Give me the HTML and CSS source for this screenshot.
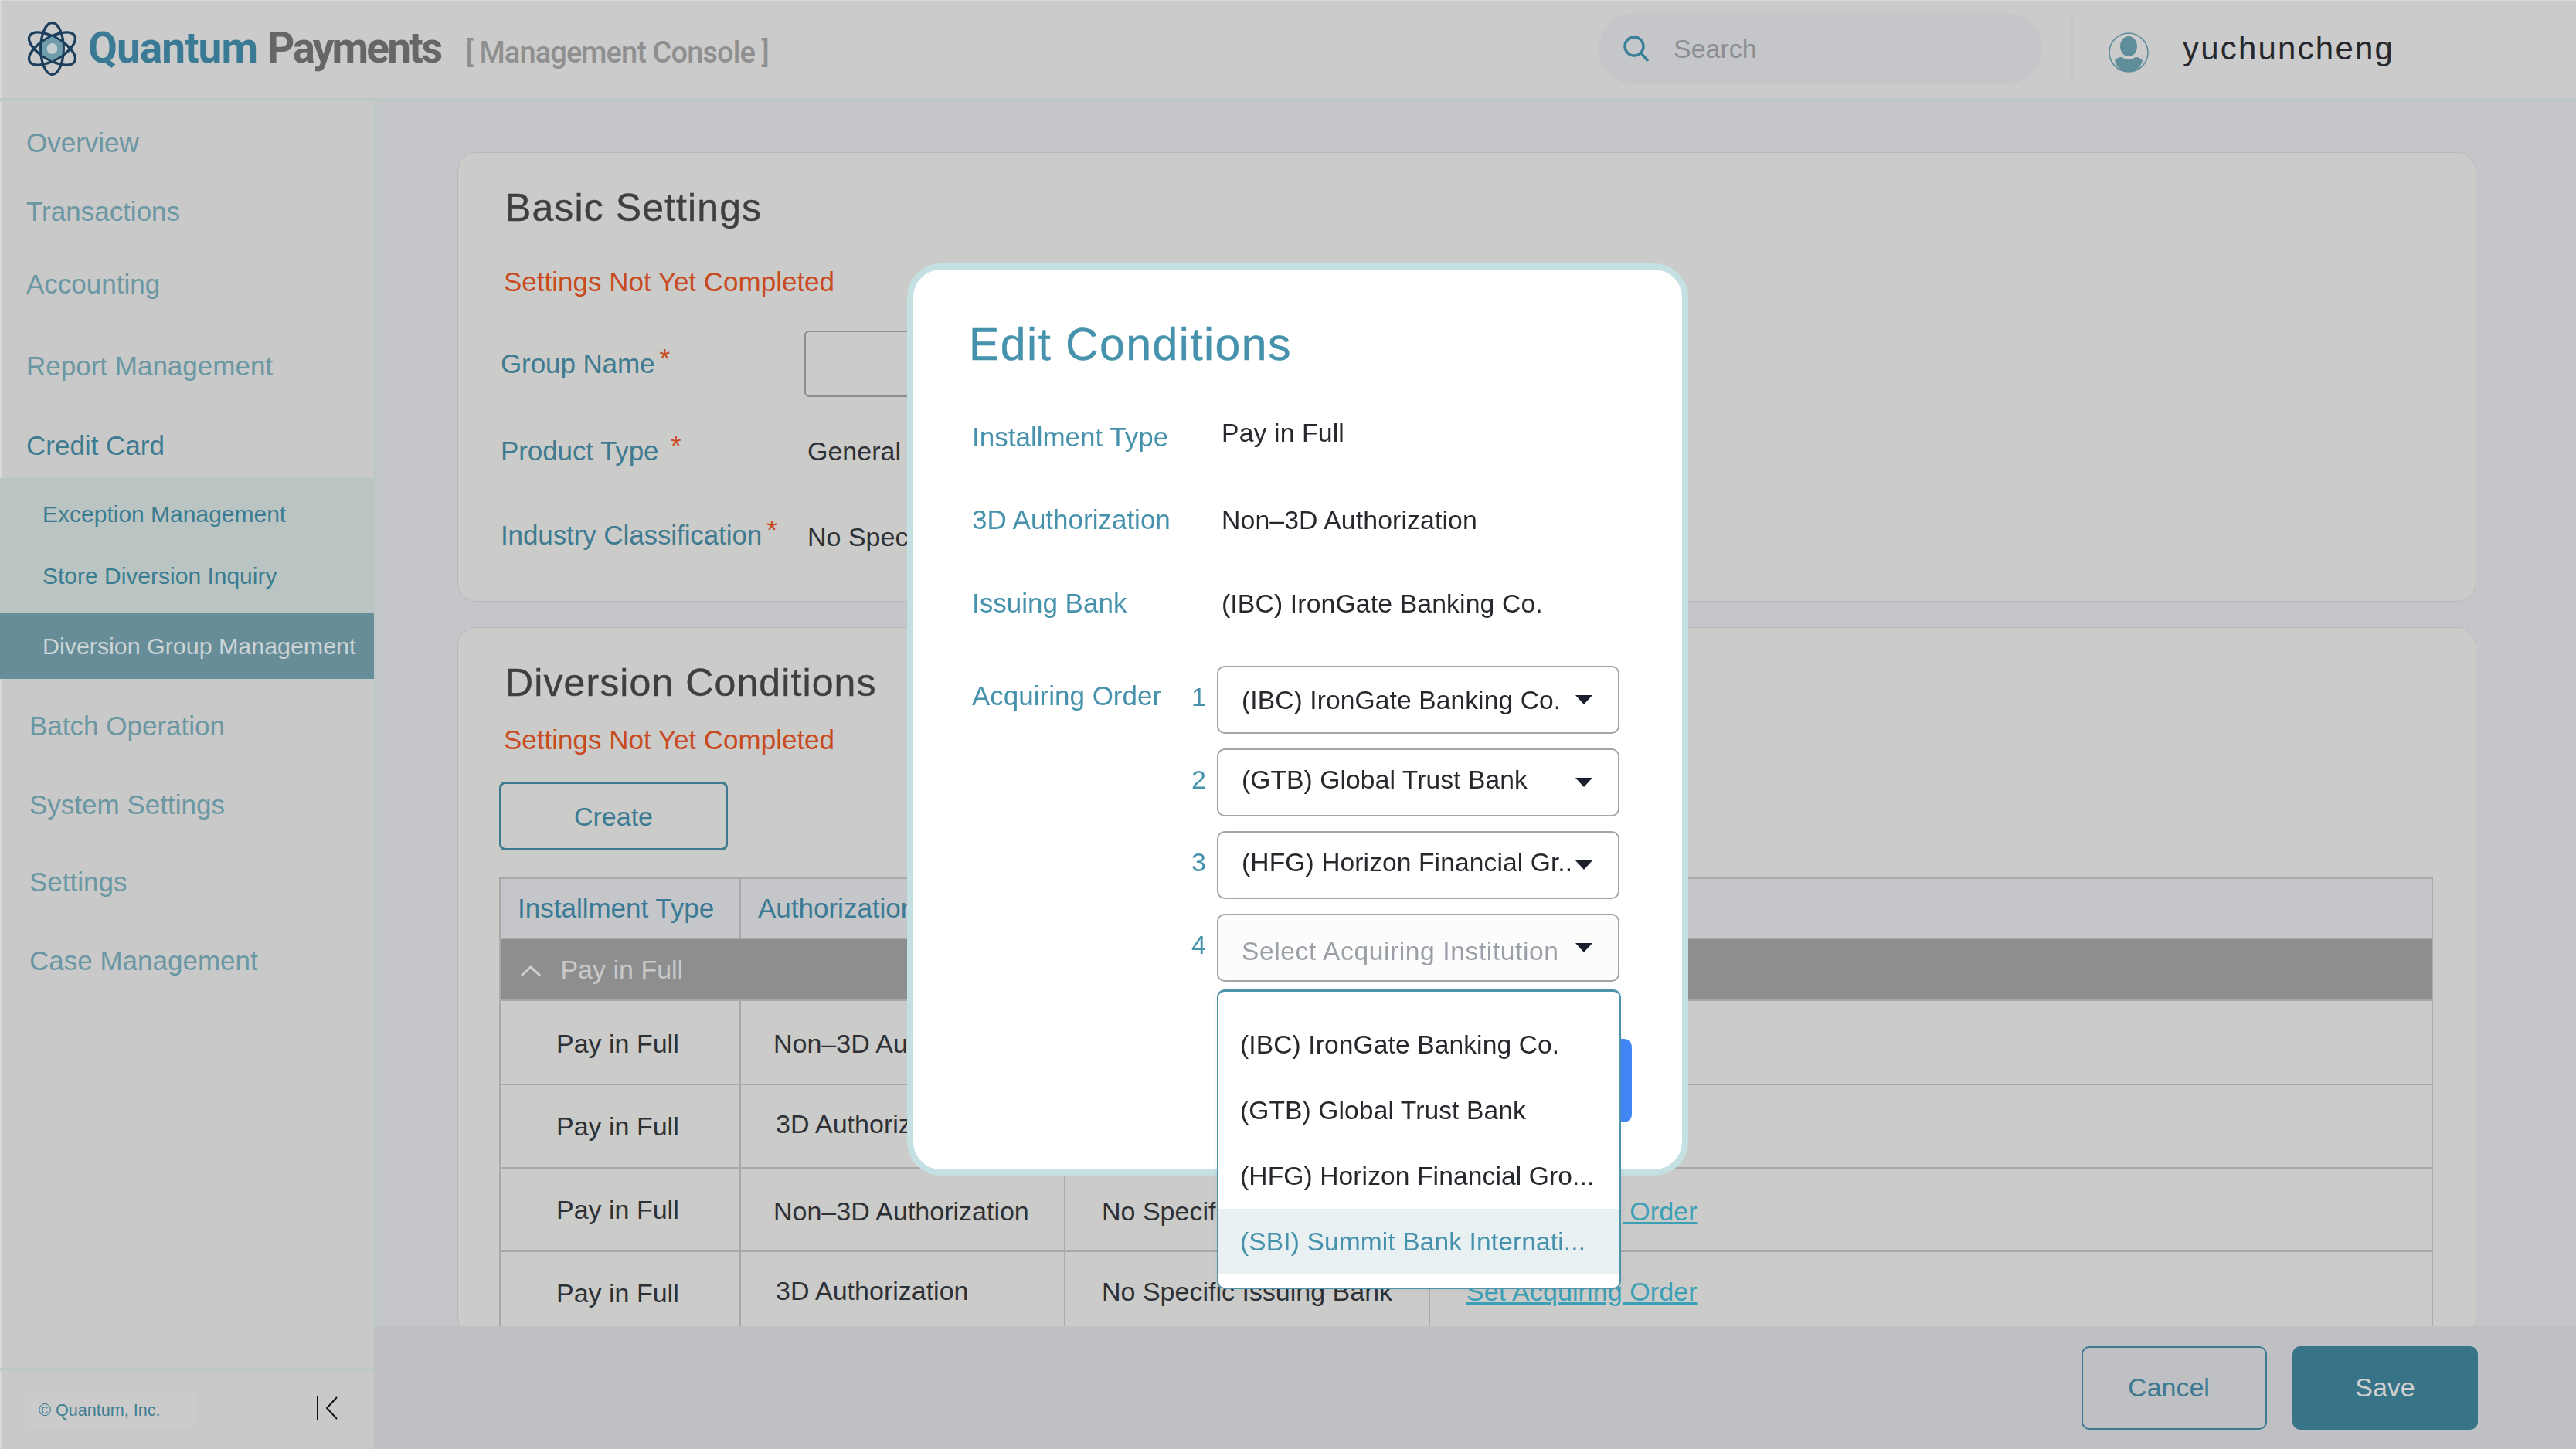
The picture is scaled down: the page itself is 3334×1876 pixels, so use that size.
FILE: index.html
```html
<!DOCTYPE html>
<html lang="en">
<head>
    <meta charset="UTF-8">
    <meta name="viewport" content="width=device-width, initial-scale=1.0">
    <title>Quantum Payments - Diversion Group Management</title>
    <link rel="stylesheet" href="styles.css">
</head>
<body>
    <header class="topbar">
        <div class="brand">
            <svg class="brand-logo" viewBox="0 0 68 72" fill="none" stroke="#1b3f5c" stroke-width="3.4">
                <ellipse cx="34" cy="36" rx="15" ry="34"/>
                <ellipse cx="34" cy="36" rx="15" ry="34" transform="rotate(60 34 36)"/>
                <ellipse cx="34" cy="36" rx="15" ry="34" transform="rotate(120 34 36)"/>
                <polygon points="34,20 47,28 47,44 34,52 21,44 21,28" fill="#6f9dab" stroke="none"/>
                <circle cx="34" cy="36" r="7" fill="#c4cdd0" stroke="none"/>
            </svg>
            <span class="brand-name">Quantum</span>
            <span class="brand-sub">Payments</span>
            <span class="brand-console">[ Management Console ]</span>
        </div>
        <div class="search">
            <svg class="search-icon" viewBox="0 0 36 34" fill="none" stroke="#3a7f98" stroke-width="3.4">
                <circle cx="15" cy="14" r="12"/>
                <path d="M24 23 L33 33"/>
            </svg>
            <span class="search-text">Search</span>
        </div>
        <div class="user">
            <svg class="user-avatar" viewBox="0 0 52 52" fill="none">
                <circle cx="26" cy="26" r="25" stroke="#5f8d9a" stroke-width="1.6"/>
                <ellipse cx="26" cy="18" rx="11" ry="13" fill="#5f8d9a"/>
                <path d="M8 36 C12 32 17 31 19 33 C22 36 30 36 33 33 C35 31 40 32 44 36 C42 46 34 51 26 51 C18 51 10 46 8 36 Z" fill="#5f8d9a"/>
            </svg>
            <span class="user-name">yuchuncheng</span>
        </div>
    </header>

    <div class="layout">
        <aside class="sidebar">
            <nav class="nav">
                <a class="nav-item">Overview</a>
                <a class="nav-item">Transactions</a>
                <a class="nav-item">Accounting</a>
                <a class="nav-item">Report Management</a>
                <a class="nav-item nav-open">Credit Card</a>
                <div class="subnav">
                    <a class="subnav-item subnav-first">Exception Management</a>
                    <a class="subnav-item">Store Diversion Inquiry</a>
                </div>
                <a class="subnav-item subnav-active">Diversion Group Management</a>
                <a class="nav-item nav-lower">Batch Operation</a>
                <a class="nav-item nav-lower">System Settings</a>
                <a class="nav-item nav-lower">Settings</a>
                <a class="nav-item nav-lower">Case Management</a>
            </nav>
            <div class="sidebar-foot">
                <span class="copyright">© Quantum, Inc.</span>
                <svg class="collapse-icon" viewBox="0 0 27 32" fill="none" stroke="#111" stroke-width="2">
                    <path d="M1 0 V32"/>
                    <path d="M26 2 L13 16 L26 30"/>
                </svg>
            </div>
        </aside>

        <main class="main">
            <div class="content">
                <section class="card card-basic">
                    <h2 class="card-title">Basic Settings</h2>
                    <p class="warning">Settings Not Yet Completed</p>
                    <div class="form">
                        <div class="form-row">
                            <label class="form-label">Group Name<span class="star">*</span></label>
                            <div class="text-input"></div>
                        </div>
                        <div class="form-row">
                            <label class="form-label label-low">Product Type <span class="star">*</span></label>
                            <span class="form-value">General</span>
                        </div>
                        <div class="form-row">
                            <label class="form-label">Industry Classification<span class="star">*</span></label>
                            <span class="form-value">No Specific</span>
                        </div>
                    </div>
                </section>

                <section class="card card-conditions">
                    <h2 class="card-title">Diversion Conditions</h2>
                    <p class="warning">Settings Not Yet Completed</p>
                    <button class="btn-create">Create</button>
                    <table class="conditions">
                        <colgroup>
                            <col class="col-type">
                            <col class="col-auth">
                            <col class="col-bank">
                            <col>
                        </colgroup>
                        <thead>
                            <tr>
                                <th>Installment Type</th>
                                <th>Authorization</th>
                                <th></th>
                                <th></th>
                            </tr>
                        </thead>
                        <tbody>
                            <tr class="group-row">
                                <td colspan="4">
                                    <svg class="group-chevron" viewBox="0 0 26 14" fill="none" stroke="#cfcfcf" stroke-width="3">
                                        <path d="M1 13 L13 2 L25 13"/>
                                    </svg>
                                    Pay in Full
                                </td>
                            </tr>
                            <tr class="row-a">
                                <td class="cell-down">Pay in Full</td>
                                <td class="cell-down">Non–3D Authorization</td>
                                <td></td>
                                <td></td>
                            </tr>
                            <tr class="row-b">
                                <td>Pay in Full</td>
                                <td class="cell-shift">3D Authorization</td>
                                <td></td>
                                <td></td>
                            </tr>
                            <tr class="row-b">
                                <td>Pay in Full</td>
                                <td class="cell-down">Non–3D Authorization</td>
                                <td class="cell-down">No Specific Issuing Bank</td>
                                <td class="cell-down"><a class="order-link">Set Acquiring Order</a></td>
                            </tr>
                            <tr class="row-a">
                                <td>Pay in Full</td>
                                <td class="cell-shift">3D Authorization</td>
                                <td class="cell-up">No Specific Issuing Bank</td>
                                <td class="cell-up"><a class="order-link">Set Acquiring Order</a></td>
                            </tr>
                        </tbody>
                    </table>
                </section>
            </div>
            <footer class="actions">
                <button class="btn-cancel">Cancel</button>
                <button class="btn-save">Save</button>
            </footer>
        </main>
    </div>

    <div class="modal">
        <h2 class="modal-title">Edit Conditions</h2>
        <div class="details">
            <div class="detail-row">
                <span class="detail-label">Installment Type</span>
                <span class="detail-value detail-raised">Pay in Full</span>
            </div>
            <div class="detail-row">
                <span class="detail-label">3D Authorization</span>
                <span class="detail-value">Non–3D Authorization</span>
            </div>
            <div class="detail-row">
                <span class="detail-label">Issuing Bank</span>
                <span class="detail-value">(IBC) IronGate Banking Co.</span>
            </div>
        </div>
        <div class="order">
            <span class="detail-label order-label">Acquiring Order</span>
            <span class="order-num">1</span>
            <div class="select"><span class="select-text">(IBC) IronGate Banking Co.</span><i class="arrow"></i></div>
            <span></span>
            <span class="order-num">2</span>
            <div class="select"><span class="select-text text-up">(GTB) Global Trust Bank</span><i class="arrow"></i></div>
            <span></span>
            <span class="order-num">3</span>
            <div class="select"><span class="select-text text-up">(HFG) Horizon Financial Gr..</span><i class="arrow"></i></div>
            <span></span>
            <span class="order-num">4</span>
            <div class="select select-empty"><span class="select-text text-down">Select Acquiring Institution</span><i class="arrow"></i></div>
        </div>
        <div class="modal-actions">
            <button class="btn-confirm"></button>
        </div>
        <ul class="dropdown">
            <li>(IBC) IronGate Banking Co.</li>
            <li>(GTB) Global Trust Bank</li>
            <li>(HFG) Horizon Financial Gro...</li>
            <li class="is-hover">(SBI) Summit Bank Internati...</li>
        </ul>
    </div>
</body>
</html>
```

FILE: styles.css
```css
* {
    box-sizing: border-box;
}
html, body {
    margin: 0;
    height: 100%;
}
body {
    display: flex;
    flex-direction: column;
    height: 1876px;
    overflow: hidden;
    font-family: "Liberation Sans", Arial, sans-serif;
    font-size: 34px;
    color: #2d3034;
    background-color: #c4c6c9;
}
h2, p, ul {
    margin: 0;
    padding: 0;
}

/* top bar */
.topbar {
    display: flex;
    align-items: center;
    flex: none;
    height: 131px;
    padding: 0 0 2px 34px;
    background-color: #cbcbcb;
    border-bottom: 4px solid #bcc8c6;
    box-shadow: inset 3px 1px 0 #d8d8d8;
}
.brand {
    display: flex;
    align-items: center;
    width: 2035px;
}
.brand-logo {
    width: 67px;
    height: 72px;
    margin-right: 13px;
}
.brand-name {
    margin-right: 13px;
    margin-bottom: 2px;
    font-family: Roboto, sans-serif;
    font-size: 55px;
    font-weight: 700;
    letter-spacing: -1px;
    color: #3a7a94;
}
.brand-sub {
    margin-right: 32px;
    margin-bottom: 2px;
    font-family: Roboto, sans-serif;
    font-size: 55px;
    font-weight: 700;
    letter-spacing: -2.8px;
    color: #666;
}
.brand-console {
    margin-top: 10px;
    font-family: Roboto, sans-serif;
    font-size: 38px;
    font-weight: 500;
    letter-spacing: -0.9px;
    color: #8f8f8f;
}
.search {
    display: flex;
    align-items: center;
    width: 574px;
    height: 92px;
    padding-left: 31px;
    border-radius: 46px;
    background-color: #c4c6c9;
}
.search-icon {
    width: 36px;
    height: 34px;
    margin-right: 30px;
}
.search-text {
    padding-top: 2px;
    color: #8c8e92;
}
.user {
    display: flex;
    align-items: center;
    height: 83px;
    margin-left: 38px;
    padding-left: 46px;
    border-left: 2px solid #bcc8c6;
}
.user-avatar {
    width: 52px;
    height: 52px;
    margin: 10px 44px 0 0;
}
.user-name {
    font-size: 42px;
    letter-spacing: 2.2px;
    color: #26282b;
}

/* sidebar */
.layout {
    display: flex;
    flex: 1;
    min-height: 0;
}
.sidebar {
    display: flex;
    flex-direction: column;
    flex: none;
    width: 484px;
    background-color: #c9c9c9;
    box-shadow: inset 3px 0 0 #d8d8d8;
}
.nav {
    display: grid;
    flex: 1;
    grid-template-rows: 90px 88px 100px 112px 89px 174px 86px 122px 82px 118px 86px;
    align-content: start;
    padding-top: 9px;
}
.nav-item {
    display: flex;
    align-items: center;
    padding-left: 34px;
    font-size: 35px;
    color: #6b97a3;
}
.nav-open {
    padding-top: 4px;
    color: #3e7b90;
}
.nav-lower {
    padding-left: 38px;
}
.subnav {
    display: flex;
    flex-direction: column;
    background-color: #b9c4c3;
}
.subnav-item {
    display: flex;
    align-items: center;
    padding-left: 55px;
    font-size: 30px;
    color: #3a7c90;
}
.subnav-first {
    height: 94px;
}
.subnav-item:not(.subnav-first):not(.subnav-active) {
    height: 66px;
}
.subnav-active {
    font-size: 30.4px;
    color: #ccd4d6;
    background-color: #678d98;
}
.sidebar-foot {
    display: flex;
    flex: none;
    align-items: center;
    justify-content: space-between;
    height: 105px;
    padding: 0 47px 0 34px;
    border-top: 4px solid #bcc8c6;
}
.copyright {
    width: 218px;
    height: 43px;
    padding-left: 16px;
    font-size: 21.6px;
    line-height: 43px;
    color: #3f7d92;
    background-color: #cbcbcb;
}
.collapse-icon {
    width: 27px;
    height: 32px;
    margin-bottom: 6px;
}

/* main */
.main {
    display: flex;
    flex-direction: column;
    flex: 1;
    min-width: 0;
}
.content {
    flex: 1;
    min-height: 0;
    overflow: hidden;
    padding: 66px 129px 0 104px;
    border-left: 4px solid #bcc8c6;
}
.card {
    border: 1px solid #b9b9bb;
    border-radius: 24px;
    background-color: #cbcbca;
    padding: 39px 55px 0 53px;
}
.card-basic {
    height: 582px;
    margin-bottom: 33px;
}
.card-title {
    margin-top: 2px;
    margin-bottom: -2px;
    margin-left: 8px;
    font-size: 50px;
    font-weight: 400;
    line-height: 60px;
    letter-spacing: 1.1px;
    color: #3f3f3f;
    -webkit-text-stroke: 0.4px #3f3f3f;
}
.warning {
    margin: 46px 0 0 6px;
    font-size: 35px;
    line-height: 44px;
    color: #c84a1f;
}
.card-conditions .warning {
    margin-top: 24px;
}
.form {
    display: flex;
    flex-direction: column;
    gap: 25px;
    margin-top: 41px;
}
.form-row {
    display: flex;
    align-items: center;
    height: 86px;
    padding-left: 2px;
}
.form-label {
    width: 393px;
    flex: none;
    font-size: 35px;
    letter-spacing: -0.1px;
    color: #3e7b90;
}
.label-low {
    padding-top: 3px;
}
.star {
    position: relative;
    top: -7px;
    margin-left: 6px;
    color: #c84a1f;
}
.form-value {
    margin: 4px 0 0 4px;
}
.text-input {
    width: 600px;
    height: 86px;
    border: 2px solid #8e8e8e;
    border-radius: 6px;
}
.btn-create {
    display: block;
    width: 296px;
    height: 89px;
    margin: 32px 0 35px 0;
    padding-top: 3px;
    border: 3px solid #3b7a91;
    border-radius: 8px;
    font: inherit;
    color: #3b7a91;
    background: none;
}

/* table */
.conditions {
    width: 2503px;
    table-layout: fixed;
    border-collapse: collapse;
}
.col-type {
    width: 311px;
}
.col-auth {
    width: 420px;
}
.col-bank {
    width: 472px;
}
.conditions th, .conditions td {
    padding: 0 0 0 47px;
    border: 2px solid #a9a9a9;
    text-align: left;
    white-space: nowrap;
    overflow: hidden;
}
.conditions th {
    height: 78px;
    padding-left: 22px;
    font-weight: 400;
    font-size: 35px;
    color: #3a7a94;
    background-color: #c4c6c9;
}
.conditions td:first-child {
    padding-left: 72px;
}
.conditions td:nth-child(2) {
    padding-left: 42px;
}
.conditions td.cell-shift {
    padding-left: 45px;
    padding-bottom: 6px;
}
.conditions td.cell-down {
    padding-top: 4px;
}
.conditions td.cell-up {
    padding-bottom: 4px;
}
.row-a {
    height: 109px;
}
.row-b {
    height: 108px;
}
.conditions .group-row td {
    height: 80px;
    padding-left: 26px;
    color: #c9c9c9;
    background-color: #8e8e8e;
}
.group-chevron {
    width: 26px;
    height: 14px;
    margin: 0 16px 3px 0;
}
.order-link {
    letter-spacing: 0.1px;
    color: #3b9fb5;
    text-decoration: underline;
}

/* bottom actions */
.actions {
    display: flex;
    flex: none;
    align-items: center;
    justify-content: flex-end;
    gap: 33px;
    height: 159px;
    padding-right: 127px;
    background-color: #bfc0c4;
}
.btn-cancel, .btn-save {
    width: 240px;
    height: 108px;
    border-radius: 10px;
    font: inherit;
}
.btn-cancel {
    padding-right: 20px;
    border: 2px solid #3d7a90;
    color: #3d7a90;
    background: none;
}
.btn-save {
    border: none;
    color: #d0d0d0;
    background-color: #377488;
}

/* modal */
.modal {
    position: fixed;
    top: 341px;
    left: 1174px;
    width: 1011px;
    height: 1181px;
    padding: 62px 0 0 74px;
    border: 8px solid #c5e0e2;
    border-radius: 44px;
    background-color: #fff;
}
.modal-title {
    margin-left: -2px;
    font-size: 59px;
    font-weight: 400;
    line-height: 70px;
    letter-spacing: 1.4px;
    color: #4692ad;
    -webkit-text-stroke: 0.4px #4692ad;
}
.details {
    display: grid;
    grid-template-rows: 108px 106px 110px;
    margin: 31px 0 26px 2px;
}
.detail-row {
    display: flex;
    align-items: center;
}
.detail-label {
    width: 323px;
    flex: none;
    font-size: 35px;
    color: #4692ad;
}
.detail-value {
    font-size: 33.8px;
    letter-spacing: 0.1px;
    color: #25282c;
}
.detail-raised {
    margin-bottom: 12px;
}
.order {
    display: grid;
    grid-template-columns: 284px 33px 521px;
    grid-auto-rows: 88px;
    row-gap: 19px;
    align-items: center;
    margin-left: 2px;
}
.order-label {
    width: auto;
    margin-bottom: 10px;
}
.order-num {
    padding-right: 20px;
    margin-bottom: 8px;
    text-align: right;
    color: #4692ad;
}
.select {
    display: flex;
    align-items: center;
    justify-content: space-between;
    height: 88px;
    padding: 0 33px 0 30px;
    border: 2px solid #a3a5ad;
    border-radius: 10px;
    font-size: 33.6px;
    letter-spacing: 0.1px;
    white-space: nowrap;
    color: #25282c;
}
.select-text {
    padding-top: 2px;
}
.select-empty {
    letter-spacing: 0.6px;
    color: #9aa0a6;
    background-color: #fcfcfd;
}
.text-up {
    padding: 0 0 6px;
}
.text-down {
    padding-top: 9px;
}
.arrow {
    flex: none;
    width: 0;
    height: 0;
    border-style: solid;
    border-width: 12px 11px 0;
    border-color: #1a1f2b transparent transparent;
}
.modal-actions {
    display: flex;
    justify-content: flex-end;
    margin: 74px 65px 0 0;
}
.btn-confirm {
    width: 240px;
    height: 108px;
    border: none;
    border-radius: 10px;
    background-color: #4287f5;
}
.dropdown {
    position: absolute;
    top: 932px;
    left: 393px;
    width: 523px;
    height: 388px;
    padding-top: 26px;
    border: 2px solid #4c93ab;
    border-top-width: 3px;
    border-radius: 10px;
    font-size: 33.6px;
    letter-spacing: 0.1px;
    list-style: none;
    background-color: #fff;
    box-shadow: 0 0 10px rgba(0, 0, 0, 0.06);
    color: #25282c;
}
.dropdown li {
    height: 85px;
    padding-left: 28px;
    line-height: 85px;
    white-space: nowrap;
}
.dropdown .is-hover {
    color: #4692ad;
    background-color: #e8f0f2;
}
```
